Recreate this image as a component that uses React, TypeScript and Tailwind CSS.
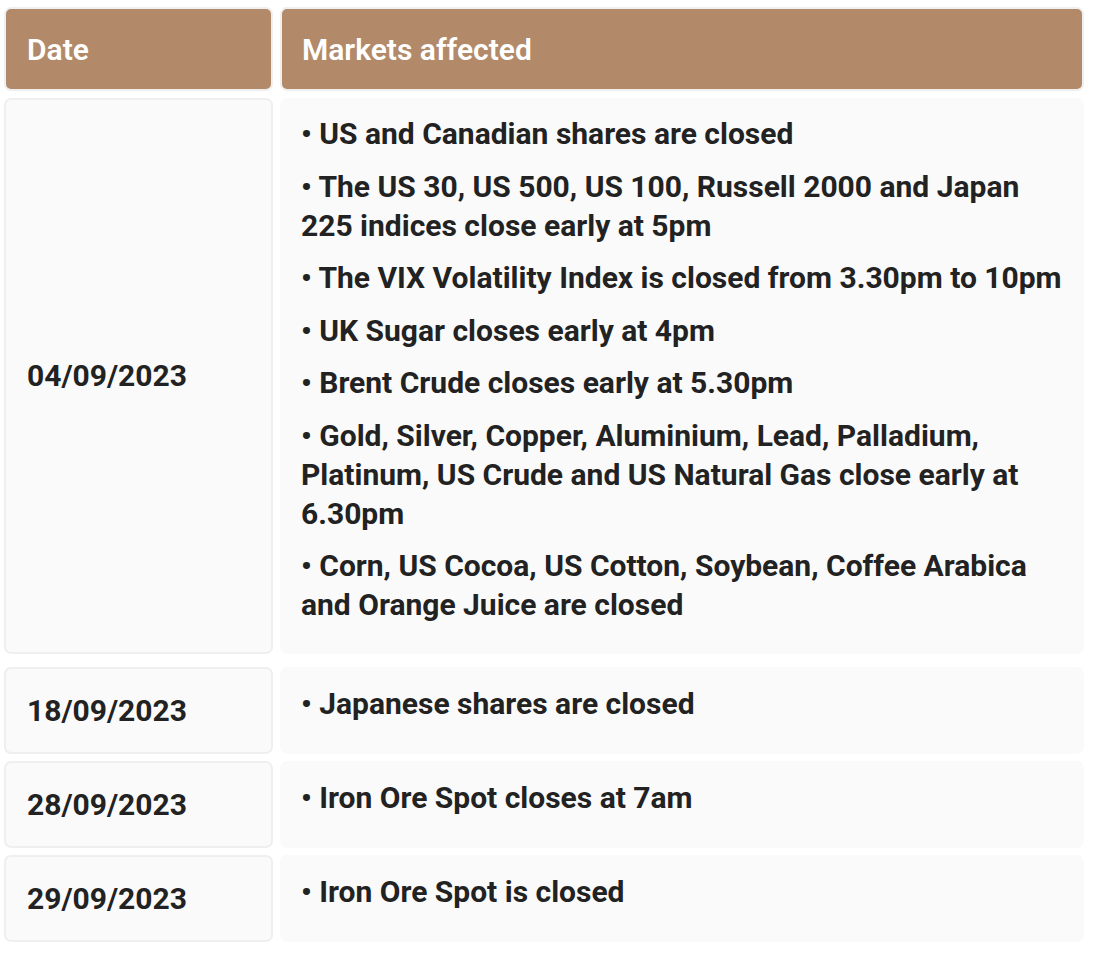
import * as React from "react"

type Row = {
  date: string
  items: string[]
}

const rows: Row[] = [
  {
    date: "04/09/2023",
    items: [
      "US and Canadian shares are closed",
      "The US 30, US 500, US 100, Russell 2000 and Japan 225 indices close early at 5pm",
      "The VIX Volatility Index is closed from 3.30pm to 10pm",
      "UK Sugar closes early at 4pm",
      "Brent Crude closes early at 5.30pm",
      "Gold, Silver, Copper, Aluminium, Lead, Palladium, Platinum, US Crude and US Natural Gas close early at 6.30pm",
      "Corn, US Cocoa, US Cotton, Soybean, Coffee Arabica and Orange Juice are closed",
    ],
  },
  { date: "18/09/2023", items: ["Japanese shares are closed"] },
  { date: "28/09/2023", items: ["Iron Ore Spot closes at 7am"] },
  { date: "29/09/2023", items: ["Iron Ore Spot is closed"] },
]

export default function App() {
  return (
    <div className="min-h-screen bg-white pt-[7px] pl-[4px] font-['Roboto',sans-serif] text-[30px] leading-[39px] font-bold text-[#222222]">
      <div className="grid w-[1080px] grid-cols-[269px_804px] gap-x-[7px] gap-y-[7px]">
        <div className="flex h-[84px] items-center rounded-[7px] border-2 border-[#efefef] bg-[#b28a69] px-[21px] text-white font-semibold">
          Date
        </div>
        <div className="flex h-[84px] items-center rounded-[7px] border-2 border-[#efefef] bg-[#b28a69] px-[20px] text-white font-semibold">
          Markets affected
        </div>

        {rows.map((row, i) => (
          <React.Fragment key={row.date}>
            <div
              className={
                "flex items-center rounded-[7px] border-2 border-[#efefef] bg-[#fafafa] px-[21px] py-[22px]" +
                (i === 0 ? " mb-[6px]" : "")
              }
            >
              {row.date}
            </div>
            <div
              className={
                "flex flex-col justify-center rounded-[7px] bg-[#fafafa] px-[21px] py-[16px]" +
                (i === 0 ? " mb-[6px]" : "")
              }
            >
              {row.items.map((item) => (
                <p key={item} className="mb-[13.5px]">
                  • {item}
                </p>
              ))}
            </div>
          </React.Fragment>
        ))}
      </div>
    </div>
  )
}
